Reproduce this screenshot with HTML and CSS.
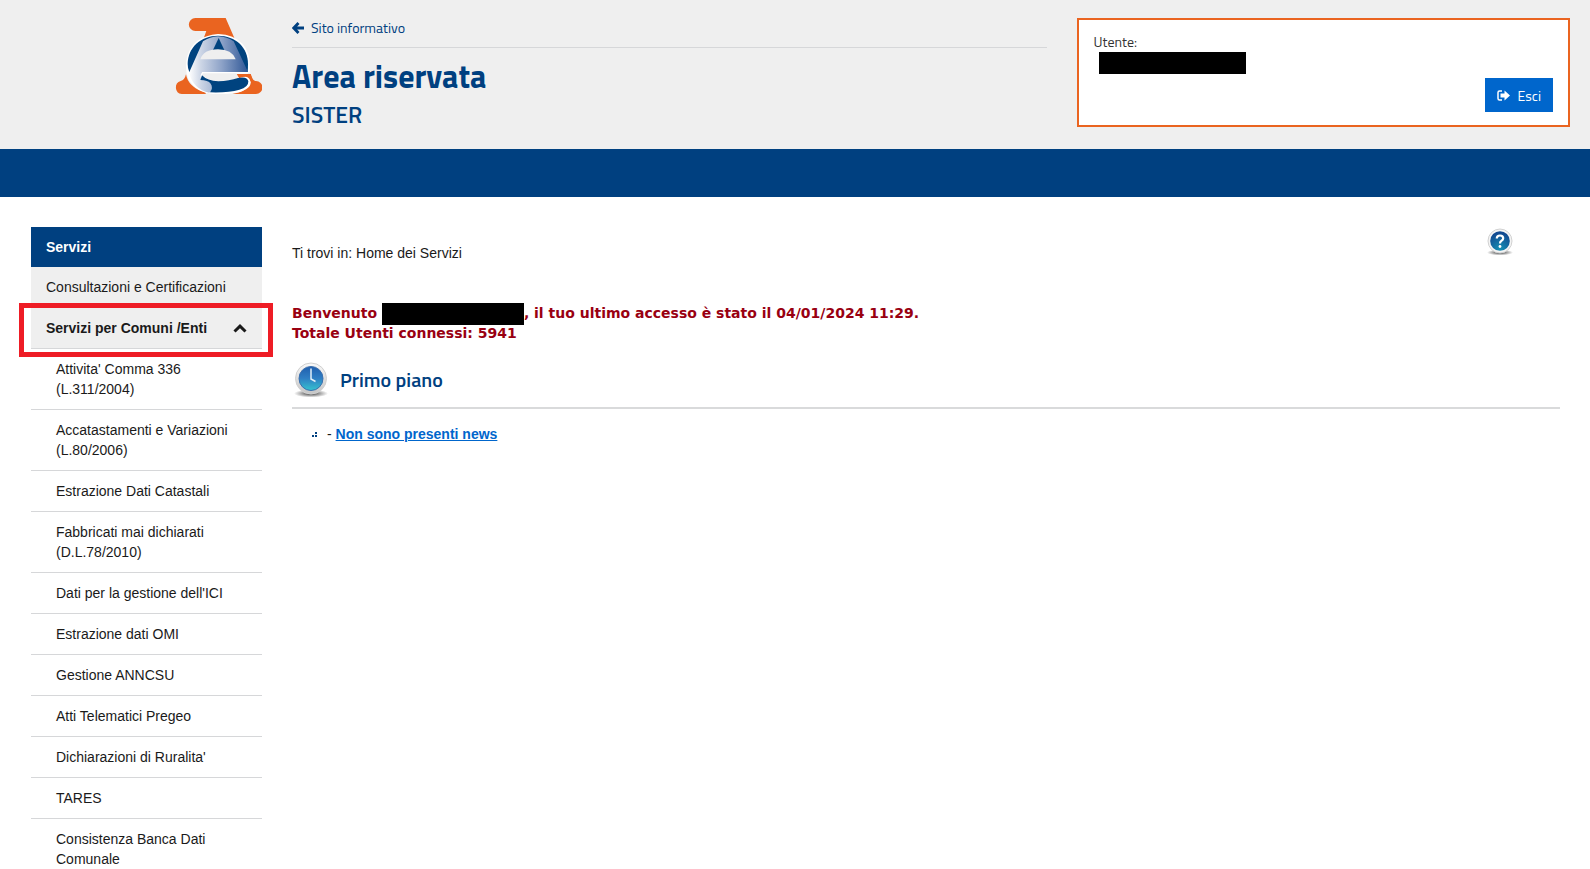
FILE: index.html
```html
<!DOCTYPE html>
<html lang="it">
<head>
  <meta charset="UTF-8">
  <title>Area riservata - SISTER</title>
  <link rel="stylesheet" href="styles.css">
</head>
<body>
  <!-- HEADER -->
  <header class="header">
    <div class="logo">
      <svg class="logo-img" viewBox="45 54 261 228" role="img" aria-label="Agenzia delle Entrate">
        <defs>
          <linearGradient id="eGrad" x1="0" x2="1" y1="0" y2="0">
            <stop offset="0" stop-color="#fff"/>
            <stop offset="0.2" stop-color="#cdd6e6"/>
            <stop offset="0.55" stop-color="#8ea3c8"/>
            <stop offset="1" stop-color="#2f5796"/>
          </linearGradient>
        </defs>
        <path fill="#ea6420" d="M106 54H197L224 116Q202 104 176 104Q152 104 131 115L139 93H106A19 19 0 0 1 106 54Z"/>
        <path fill="#ea6420" d="M78 223Q84 262 137 278V282H65A20 20 0 0 1 62 243Q74 241 78 223Z"/>
        <path fill="#ea6420" d="M229 222H272Q276 243 288 243A19 19 0 0 1 288 282H217Q272 270 272 248Q270 230 238 237Z"/>
        <path fill="#fff" d="M174 102Q222 104 248 132Q274 160 269 219H220V230Q270 220 272 247Q268 268 236 277Q206 284 160 282Q110 278 86 240Q72 205 82 168Q100 108 174 102Z"/>
        <path fill="#ea6420" d="M229 222H272L279 240H273Q266 224 237 235Z"/>
        <path fill="#00437f" d="M174 107C228 107 264 143 264 192Q264 206 263 216H88Q83 205 83 192C83 143 122 107 174 107Z"/>
        <path fill="url(#eGrad)" d="M129 124Q150 110 174 109Q202 110 221 124L264 216H127Q118 226 124 238Q148 242 155 254Q158 268 148 278Q100 268 87 218Z"/>
        <path fill="#00437f" d="M176 114L193 150H159Z"/>
        <path fill="#efefef" d="M121 178Q130 148 174 148Q216 148 227 178Z"/>
        <path fill="#fff" d="M127 216H264V221H127Z"/>
        <path fill="#efefef" d="M130 220H229L237 234Q205 246 172 243Q140 240 126 224Z"/>
        <path fill="#00437f" d="M126 226Q142 243 175 244Q208 243 234 234Q262 228 265 244Q266 262 238 269Q204 279 150 277Q160 262 152 251Q144 240 121 240Z"/>
      </svg>
    </div>
    <div class="heading">
      <div class="back-row">
        <a class="back" href="#">
          <svg class="icon" viewBox="0 0 12 12" aria-hidden="true">
            <path d="M6.5 1L1.8 6L6.5 11M2 6H12" fill="none" stroke="currentColor" stroke-width="2.8"/>
          </svg>
          Sito informativo
        </a>
      </div>
      <h1>Area riservata</h1>
      <p class="subtitle">SISTER</p>
    </div>
    <div class="user-box">
      <div class="user-label">Utente:</div>
      <div class="user-name"></div>
      <button class="logout" type="button">
        <svg class="logout-icon" viewBox="0 0 13 11" aria-hidden="true">
          <path d="M5 1H2.500Q1 1 1 2.500V8.500Q1 10 2.500 10H5" fill="none" stroke="currentColor" stroke-width="1.500"/>
          <path d="M3.500 3.500H7.500V0.500L13 5.500L7.500 10.500V7.500H3.500Z" fill="currentColor"/>
        </svg>
        Esci
      </button>
    </div>
  </header>
  <div class="navbar"></div>

  <div class="container">
    <!-- SIDEBAR -->
    <nav class="sidebar">
      <h2 class="menu-title">Servizi</h2>
      <ul class="menu">
        <li><a href="#">Consultazioni e Certificazioni</a></li>
        <li class="highlight">
          <a class="open" href="#">
            Servizi per Comuni /Enti
            <svg class="chevron" viewBox="0 0 14 9" aria-hidden="true">
              <path d="M1.500 7.500L7 2.200L12.500 7.500" fill="none" stroke="currentColor" stroke-width="3"/>
            </svg>
          </a>
        </li>
      </ul>
      <ul class="submenu">
        <li><a href="#">Attivita' Comma 336 (L.311/2004)</a></li>
        <li><a href="#">Accatastamenti e Variazioni (L.80/2006)</a></li>
        <li><a href="#">Estrazione Dati Catastali</a></li>
        <li><a href="#">Fabbricati mai dichiarati (D.L.78/2010)</a></li>
        <li><a href="#">Dati per la gestione dell'ICI</a></li>
        <li><a href="#">Estrazione dati OMI</a></li>
        <li><a href="#">Gestione ANNCSU</a></li>
        <li><a href="#">Atti Telematici Pregeo</a></li>
        <li><a href="#">Dichiarazioni di Ruralita'</a></li>
        <li><a href="#">TARES</a></li>
        <li><a href="#">Consistenza Banca Dati Comunale</a></li>
      </ul>
    </nav>

    <!-- CONTENT -->
    <main class="content">
      <div class="top-row">
        <div class="breadcrumb">Ti trovi in: Home dei Servizi</div>
        <a class="help" href="#" aria-label="Aiuto">
          <svg class="help-icon" viewBox="0 0 26 28" aria-hidden="true">
            <defs>
              <radialGradient id="helpGrad" cx="0.5" cy="0.9" r="0.8">
                <stop offset="0" stop-color="#1590b4"/>
                <stop offset="1" stop-color="#124a91"/>
              </radialGradient>
              <radialGradient id="shadow">
                <stop offset="0.3" stop-color="#777"/>
                <stop offset="1" stop-color="#fff"/>
              </radialGradient>
            </defs>
            <ellipse cx="13" cy="24.500" rx="13" ry="3" fill="url(#shadow)"/>
            <circle cx="13" cy="13" r="12" fill="#f4f4f4" stroke="#d2d2d2"/>
            <circle cx="13" cy="13" r="9.800" fill="url(#helpGrad)"/>
            <path d="M9.800 10.500Q9.800 7.500 13 7.500Q16.200 7.500 16.200 10.200Q16.200 11.800 14.500 12.700Q13 13.500 13 15.500" fill="none" stroke="#fff" stroke-width="2.200"/>
            <circle cx="13" cy="18.500" r="1.400" fill="#fff"/>
          </svg>
        </a>
      </div>

      <p class="welcome">
        Benvenuto <span class="name"></span>, il tuo ultimo accesso è stato il 04/01/2024 11:29.<br>
        Totale Utenti connessi: 5941
      </p>

      <div class="section-title">
        <svg class="clock" viewBox="0 0 34 36" aria-hidden="true">
          <defs>
            <linearGradient id="clockGrad" x1="0" x2="0" y1="0" y2="1">
              <stop offset="0" stop-color="#205fae"/>
              <stop offset="0.5" stop-color="#2f7fc4"/>
              <stop offset="1" stop-color="#35c3cf"/>
            </linearGradient>
            <linearGradient id="ringGrad" x1="0" x2="0" y1="0" y2="1">
              <stop offset="0" stop-color="#fafafa"/>
              <stop offset="1" stop-color="#c4c4c4"/>
            </linearGradient>
          </defs>
          <ellipse cx="17" cy="31.500" rx="17" ry="4" fill="url(#shadow)"/>
          <circle cx="17" cy="16.500" r="15.500" fill="url(#ringGrad)" stroke="#d0d0d0"/>
          <circle cx="17" cy="16.500" r="12" fill="url(#clockGrad)" stroke="#3b6fae"/>
          <path d="M17 6.500V17L21.500 19.500" fill="none" stroke="#e4f0f8" stroke-width="1.500"/>
        </svg>
        <h2>Primo piano</h2>
      </div>

      <ul class="news">
        <li>
          <svg class="dots" viewBox="0 0 6 5" aria-hidden="true">
            <path fill="#004080" d="M0 3H2V5H0ZM3 3H5V5H3ZM3 0H5V2H3Z"/>
          </svg>
          <span>- <a href="#">Non sono presenti news</a></span>
        </li>
      </ul>
    </main>
  </div>
</body>
</html>
```

FILE: styles.css
```css
* {
  box-sizing: border-box;
}

body {
  margin: 0;
  font-family: Arial, "Liberation Sans", sans-serif;
  font-size: 14px;
  line-height: 20px;
  color: #1a1a1a;
  background-color: #fff;
}

h1, h2, p, ul {
  margin: 0;
  padding: 0;
}

ul {
  list-style: none;
}

/* header */
.header {
  display: grid;
  grid-template-columns: 231px 754fr 493fr;
  gap: 30px;
  align-items: start;
  padding: 18px 20px 15px 31px;
  background-color: #efefef;
  font-family: "Titillium Web", Roboto, sans-serif;
  color: #004080;
}

.logo {
  display: flex;
  justify-content: flex-end;
}

.logo-img {
  width: 87px;
  height: 76px;
}

.back-row {
  height: 30px;
  border-bottom: 1px solid #d6d7d9;
}

.back {
  display: inline-flex;
  align-items: center;
  gap: 7px;
  color: #004080;
  text-decoration: none;
}

.icon {
  width: 12px;
  height: 12px;
}

h1 {
  margin-top: 8px;
  font-size: 32px;
  line-height: 40px;
  font-weight: 700;
}

.subtitle {
  font-size: 23px;
  line-height: 38px;
  font-weight: 600;
}

.user-box {
  padding: 12px 15px 13px;
  background-color: #fff;
  border: 2px solid #ea6420;
  color: #333;
}

.user-name {
  width: 147px;
  height: 22px;
  margin-left: 5px;
  background-color: #000;
}

.logout {
  display: flex;
  align-items: center;
  gap: 8px;
  height: 34px;
  margin-top: 4px;
  margin-left: auto;
  padding: 0 12px;
  border: none;
  background-color: #0066cc;
  color: #fff;
  font-family: inherit;
  font-size: 14px;
  cursor: pointer;
}

.logout-icon {
  width: 13px;
  height: 11px;
}

.navbar {
  height: 48px;
  background-color: #004080;
}

/* page */
.container {
  display: grid;
  grid-template-columns: 231px 1fr;
  gap: 30px;
  padding: 30px 30px 0 31px;
}

.menu-title {
  padding: 10px 15px;
  background-color: #004080;
  color: #fff;
  font-size: 14px;
  line-height: 20px;
}

.sidebar a {
  display: block;
  color: #1a1a1a;
  text-decoration: none;
}

.sidebar li {
  border-bottom: 1px solid #d6d7d9;
}

.menu li {
  background-color: #efefef;
}

.menu li:first-child {
  border-color: #efefef;
}

.menu a {
  padding: 10px 15px;
}

.sidebar .open {
  display: flex;
  justify-content: space-between;
  align-items: center;
  font-weight: bold;
}

.chevron {
  width: 14px;
  height: 9px;
}

.highlight {
  position: relative;
}

.highlight::after {
  content: "";
  position: absolute;
  top: -5px;
  right: -11px;
  bottom: -9px;
  left: -12px;
  border: 5px solid #ee1c25;
  pointer-events: none;
}

.submenu a {
  padding: 10px 25px;
}

.top-row {
  display: flex;
  justify-content: space-between;
  padding-right: 47px;
}

.breadcrumb {
  padding-top: 16px;
}

.help {
  padding-top: 1px;
}

.help-icon {
  display: block;
  width: 26px;
  height: 28px;
}

.welcome {
  margin-top: 40px;
  font-family: Verdana, "DejaVu Sans", sans-serif;
  font-weight: bold;
  color: #990011;
}

.name {
  display: inline-block;
  width: 142px;
  height: 22px;
  margin: -3px 0;
  background-color: #000;
  vertical-align: middle;
}

.section-title {
  display: flex;
  align-items: center;
  gap: 12px;
  margin-top: 19px;
  padding: 0 2px 9px;
  border-bottom: 2px solid #d9dadb;
}

.section-title h2 {
  font-family: "Titillium Web", Roboto, sans-serif;
  font-size: 20px;
  line-height: 24px;
  font-weight: 600;
  color: #004080;
}

.clock {
  width: 34px;
  height: 36px;
}

.news {
  padding: 15px 20px;
}

.news li {
  display: flex;
  align-items: center;
  gap: 9px;
}

.news a {
  color: #0066cc;
  font-weight: bold;
}

.dots {
  width: 6px;
  height: 5px;
}
```
